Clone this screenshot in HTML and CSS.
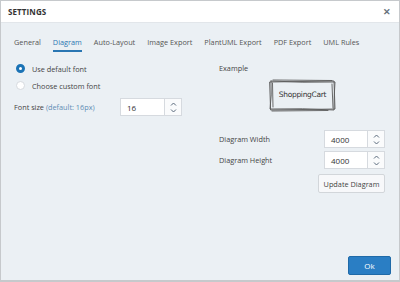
FILE: index.html
```html
<!DOCTYPE html>
<html lang="en">
<head>
    <meta charset="UTF-8">
    <title>Settings</title>
    <link rel="stylesheet" href="styles.css">
</head>
<body>
    <div class="dialog">
        <div class="dialog-header">
            <span class="dialog-title">SETTINGS</span>
            <span class="close-btn">&#x2715;</span>
        </div>

        <div class="dialog-body">
            <div class="tabs">
                <span class="tab">General</span>
                <span class="tab active">Diagram</span>
                <span class="tab">Auto-Layout</span>
                <span class="tab">Image Export</span>
                <span class="tab">PlantUML Export</span>
                <span class="tab">PDF Export</span>
                <span class="tab">UML Rules</span>
            </div>

            <div class="columns">
                <div class="col-left">
                    <label class="radio-row">
                        <span class="radio checked"></span>
                        Use default font
                    </label>
                    <label class="radio-row">
                        <span class="radio"></span>
                        Choose custom font
                    </label>
                    <div class="field-row font-size-row">
                        <span class="field-label">Font size <span class="hint">(default: 16px)</span></span>
                        <div class="spinner">
                            <span class="spinner-value">16</span>
                            <span class="spinner-btns">
                                <svg width="7" height="4" viewBox="0 0 7 4"><path d="M1 3.5 L3.5 1 L6 3.5" fill="none" stroke="#5a6b7c" stroke-width="1"/></svg>
                                <svg width="7" height="4" viewBox="0 0 7 4"><path d="M1 0.5 L3.5 3 L6 0.5" fill="none" stroke="#5a6b7c" stroke-width="1"/></svg>
                            </span>
                        </div>
                    </div>
                </div>

                <div class="col-right">
                    <div class="example-label">Example</div>
                    <div class="example-box">
                        <svg width="69" height="33" viewBox="0 0 69 33">
                            <g fill="none" stroke="#5a5a5a" stroke-width="0.9" stroke-linecap="round">
                                <path d="M2 3 L66 2 L67 30 L3 31 Z"/>
                                <path d="M3 2 Q35 4 67 3 Q66 16 66 31 Q35 29 2 30 Q4 16 3 2"/>
                                <path d="M5 1 L64 1.5 M64 5 L65 29 M4 32 L60 31.5 M4.5 4 L5 28"/>
                            </g>
                        </svg>
                        <span class="example-text">ShoppingCart</span>
                    </div>

                    <div class="field-row">
                        <span class="field-label">Diagram Width</span>
                        <div class="spinner">
                            <span class="spinner-value">4000</span>
                            <span class="spinner-btns">
                                <svg width="7" height="4" viewBox="0 0 7 4"><path d="M1 3.5 L3.5 1 L6 3.5" fill="none" stroke="#5a6b7c" stroke-width="1"/></svg>
                                <svg width="7" height="4" viewBox="0 0 7 4"><path d="M1 0.5 L3.5 3 L6 0.5" fill="none" stroke="#5a6b7c" stroke-width="1"/></svg>
                            </span>
                        </div>
                    </div>
                    <div class="field-row">
                        <span class="field-label">Diagram Height</span>
                        <div class="spinner">
                            <span class="spinner-value">4000</span>
                            <span class="spinner-btns">
                                <svg width="7" height="4" viewBox="0 0 7 4"><path d="M1 3.5 L3.5 1 L6 3.5" fill="none" stroke="#5a6b7c" stroke-width="1"/></svg>
                                <svg width="7" height="4" viewBox="0 0 7 4"><path d="M1 0.5 L3.5 3 L6 0.5" fill="none" stroke="#5a6b7c" stroke-width="1"/></svg>
                            </span>
                        </div>
                    </div>
                    <div class="update-row">
                        <button class="btn-update">Update Diagram</button>
                    </div>
                </div>
            </div>

            <div class="dialog-footer">
                <button class="btn-ok">Ok</button>
            </div>
        </div>
    </div>
</body>
</html>
```

FILE: styles.css
```css
body {
    margin: 0;
    padding: 0;
    font-family: 'Open Sans', 'Noto Sans', sans-serif;
    font-size: 7.3px;
    color: #444;
}

.dialog {
    width: 400px;
    height: 282px;
    box-sizing: border-box;
    border: 1px solid #c6c9cc;
    border-bottom-width: 2px;
    display: flex;
    flex-direction: column;
    background: #ebf0f4;
}

.dialog-header {
    height: 21px;
    background: white;
    display: flex;
    align-items: center;
    justify-content: space-between;
    padding: 0 8px 0 7px;
    border-bottom: 1px solid #e2e6ea;
}

.dialog-title {
    font-weight: bold;
    font-size: 8px;
    color: #333;
    letter-spacing: 0.1px;
}

.close-btn {
    font-size: 9px;
    font-weight: bold;
    color: #67717c;
}

.dialog-body {
    flex: 1;
    display: flex;
    flex-direction: column;
    padding: 14px 8px 5px 13px;
}

.tabs {
    display: flex;
    gap: 12px;
    height: 16px;
    align-items: flex-start;
}

.tab {
    color: #555;
    padding-bottom: 3px;
}

.tab.active {
    color: #2a76b2;
    border-bottom: 2px solid #2a76b2;
}

.columns {
    display: flex;
    margin-top: 7px;
}

.col-left {
    width: 204px;
    display: flex;
    flex-direction: column;
}

.radio-row {
    display: flex;
    align-items: center;
    gap: 7px;
    height: 17px;
    padding-left: 2px;
    color: #444;
}

.radio {
    width: 9px;
    height: 9px;
    border-radius: 50%;
    box-sizing: border-box;
    border: 1px solid #d6dadf;
    background: white;
}

.radio.checked {
    border: 3px solid #1b73b5;
}

.field-row {
    display: flex;
    align-items: center;
    justify-content: space-between;
    height: 20px;
    margin-bottom: 2px;
}

.font-size-row {
    margin-top: 3px;
    width: 168px;
}

.hint {
    color: #5e8db5;
}

.spinner {
    display: flex;
    height: 18px;
    background: white;
    border: 1px solid #d6dadf;
    box-sizing: border-box;
}

.spinner-value {
    width: 44px;
    padding-left: 6px;
    box-sizing: border-box;
    display: flex;
    align-items: center;
    font-size: 8px;
    color: #333;
    border-right: 1px solid #d6dadf;
}

.spinner-btns {
    width: 16px;
    display: flex;
    flex-direction: column;
    align-items: center;
    justify-content: center;
    gap: 3px;
    background: #fafbfc;
}

.spinner-btns svg {
    display: block;
}

.col-right {
    width: 166px;
    display: flex;
    flex-direction: column;
    padding-left: 1px;
}

.example-label {
    height: 11px;
    padding-top: 3px;
}

.example-box {
    position: relative;
    width: 69px;
    height: 33px;
    margin: 5px 0 17px 49px;
}

.example-text {
    position: absolute;
    left: 0;
    right: 0;
    top: 11px;
    text-align: center;
    font-family: 'DejaVu Sans', sans-serif;
    font-size: 7.5px;
    color: #333;
    letter-spacing: -0.3px;
}

.col-right .field-row {
    margin-bottom: 1px;
}

.col-right .spinner-value {
    width: 43px;
}

.update-row {
    display: flex;
    justify-content: flex-end;
    margin-top: 3px;
}

.btn-update {
    font-family: 'Open Sans', 'Noto Sans', sans-serif;
    font-size: 7.3px;
    color: #444;
    background: #f7f8fa;
    border: 1px solid #d2d6da;
    border-radius: 2px;
    height: 19px;
    width: 67px;
    padding: 0;
}

.dialog-footer {
    margin-top: auto;
    display: flex;
    justify-content: flex-end;
}

.btn-ok {
    width: 43px;
    height: 19px;
    background: #2a7ec4;
    border: 1px solid #1f6aa8;
    border-radius: 2px;
    color: white;
    font-family: 'Open Sans', 'Noto Sans', sans-serif;
    font-size: 8px;
}
```
